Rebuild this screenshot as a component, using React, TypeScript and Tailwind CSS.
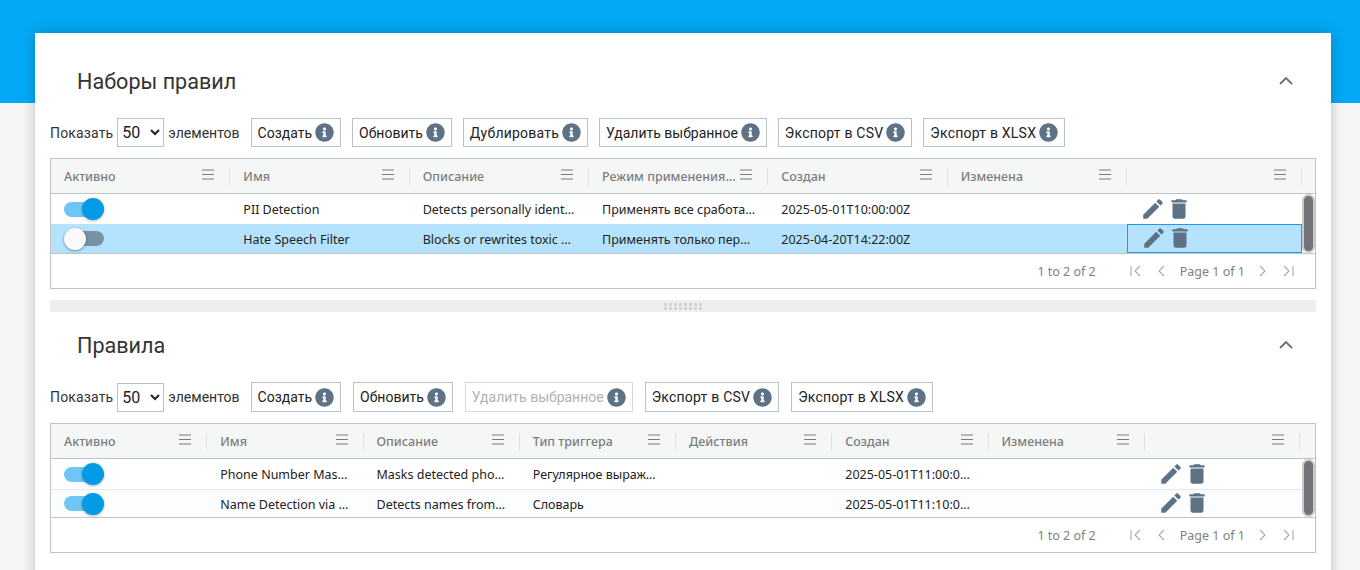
import type { ReactNode } from "react";
import { FaInfoCircle } from "react-icons/fa";

interface Column {
    title: string;
    truncatedTitle?: boolean;
}

interface Row {
    active: boolean;
    cells: string[];
    selected?: boolean;
    height: number;
    striped?: boolean;
}

const TOOLBAR_ONE = ["Создать", "Обновить", "Дублировать", "Удалить выбранное", "Экспорт в CSV", "Экспорт в XLSX"];
const TOOLBAR_TWO = ["Создать", "Обновить", "Удалить выбранное", "Экспорт в CSV", "Экспорт в XLSX"];
const WIDE_LABELS = ["Дублировать", "Экспорт в CSV", "Экспорт в XLSX"];

const MenuIcon = () => (
    <svg width="12" height="11" viewBox="0 0 12 11" className="shrink-0 -mt-[3px]">
        <path d="M0 1h12M0 5.5h12M0 10h12" stroke="#77797a" strokeWidth="1.2" fill="none" />
    </svg>
);

const Toggle = ({ on }: { on: boolean }) => (
    <div
        className={
            on
                ? "flex h-[15px] w-10 items-center justify-end rounded-full bg-[#6fc5f3]"
                : "flex h-[15px] w-10 items-center justify-start rounded-full bg-[#7891a4]"
        }
    >
        <div
            className={
                on
                    ? "h-[22px] w-[22px] shrink-0 rounded-full bg-[#039be5] shadow-[0_1px_3px_rgba(0,0,0,0.3)]"
                    : "h-[22px] w-[22px] shrink-0 rounded-full bg-[#fafafa] shadow-[0_1px_3px_rgba(0,0,0,0.4)]"
            }
        />
    </div>
);

const Actions = () => (
    <div className="flex h-[27px] items-start">
        <svg width="26" height="26" viewBox="0 0 24 24" fill="#5d7284" className="shrink-0">
            <path d="M3 17.25V21h3.75L17.81 9.94l-3.75-3.75L3 17.25zM20.71 7.04c.39-.39.39-1.02 0-1.41l-2.34-2.34c-.39-.39-1.02-.39-1.41 0l-1.83 1.83 3.75 3.75 1.83-1.83z" />
        </svg>
        <svg width="26" height="26" viewBox="0 0 24 24" fill="#5d7284" className="shrink-0">
            <path d="M6 19c0 1.1.9 2 2 2h8c1.1 0 2-.9 2-2V7H6v12zM19 4h-3.5l-1-1h-5l-1 1H5v2h14V4z" />
        </svg>
    </div>
);

const PagerIcon = ({ d }: { d: string }) => (
    <svg width="12" height="12" viewBox="0 0 12 12" fill="none" className="shrink-0 -mt-[3px]">
        <path d={d} stroke="#a4a8aa" strokeWidth="1.1" />
    </svg>
);

const Toolbar = ({ buttons, disabled, tall }: { buttons: string[]; disabled?: string; tall?: boolean }) => (
    <div className={`flex ${tall ? "h-[30px]" : "h-[29px]"} items-center font-['Roboto',sans-serif] text-sm text-[#333]`}>
        <span className="tracking-[0.15px]">Показать</span>
        <select
            defaultValue="50"
            className="mx-1 h-[29px] w-[47px] border border-[#b9c1c8] bg-white text-base text-[#222]"
        >
            <option value="50">50</option>
        </select>
        <span className="mr-[11px]">элементов</span>
        <div className={`flex ${tall ? "gap-[12px]" : "gap-[11px]"}`}>
            {buttons.map((b) => (
                <button
                    key={b}
                    className={[
                        "flex items-center gap-[3px] border pl-[6px] pr-[6px]",
                        tall ? "h-[30px]" : "h-[29px]",
                        b === disabled ? "border-[#d5dadd] text-[#aeb2b5]" : "border-[#b9c1c8] text-[#222]",
                        WIDE_LABELS.includes(b) ? "tracking-[0.22px]" : "",
                    ].join(" ")}
                >
                    {b}
                    <FaInfoCircle className="text-[#5d7284]" size={19} />
                </button>
            ))}
        </div>
    </div>
);

const Grid = ({
    columns,
    rows,
    colWidth,
    lastCol,
    cellPad,
}: {
    columns: Column[];
    rows: Row[];
    colWidth: string;
    lastCol: string;
    cellPad: string;
}) => (
    <div className="mt-[11px] border border-[#bdc3c7] font-['Noto_Sans',sans-serif] text-[12.5px]">
        {/* Header */}
        <div className="flex h-[35px] border-b border-[#bdc3c7] bg-[#f5f7f7] text-[#7b7d7e]">
            {columns.map((c, i) => (
                <div key={i} className={`${i === columns.length - 1 ? lastCol : colWidth} flex shrink-0 items-center`}>
                    <span className="min-w-0 flex-1 truncate pl-[13px] pt-[3px] font-medium">{c.title}</span>
                    <div className={c.truncatedTitle ? "ml-[3px] mr-[15px] flex" : "mr-[15px] flex"}>
                        <MenuIcon />
                    </div>
                    <div className="h-[17px] w-px shrink-0 bg-[#dfe2e3]" />
                </div>
            ))}
        </div>

        {/* Rows */}
        <div className="flex border-b border-[#bdc3c7]">
            <div className="min-w-0 flex-1">
                {rows.map((r, ri) => (
                    <div
                        key={ri}
                        className={
                            r.selected
                                ? "flex overflow-hidden bg-[#b5e3fd] text-[#222]"
                                : r.striped
                                  ? "flex overflow-hidden border-t border-[#e6e9ec] bg-[#fbfdff] text-[#222]"
                                  : "flex overflow-hidden bg-white text-[#222]"
                        }
                        style={{ height: r.height }}
                    >
                        {columns.map((_, i) => {
                            const isLast = i === columns.length - 1;
                            return (
                                <div
                                    key={i}
                                    className={`${isLast ? lastCol : colWidth} flex shrink-0 items-center pl-[13px] ${cellPad} ${
                                        isLast && r.selected ? "border border-[#2196f3] pl-[12px]" : ""
                                    }`}
                                >
                                    {i === 0 && <Toggle on={r.active} />}
                                    {i > 0 && !isLast && (
                                        <span className={r.selected || r.striped ? "truncate pt-[4px]" : "truncate pt-[2px]"}>
                                            {r.cells[i - 1]}
                                        </span>
                                    )}
                                    {isLast && <Actions />}
                                </div>
                            );
                        })}
                    </div>
                ))}
            </div>
            {/* Scrollbar */}
            <div className="w-[13px] shrink-0 rounded-full border-2 border-[#c9c9cc] bg-[#747378]" />
        </div>

        {/* Pager */}
        <div className="flex h-[34px] items-center justify-end pr-[21px] pt-[3px] text-[#7d8284]">
            <span>1 to 2 of 2</span>
            <div className="ml-[34px] flex items-center">
                <PagerIcon d="M1 1v10M10 1L5 6l5 5" />
                <div className="ml-[13px]">
                    <PagerIcon d="M9 1L4 6l5 5" />
                </div>
                <span className="ml-[13px] mr-[12px]">Page 1 of 1</span>
                <PagerIcon d="M3 1l5 5-5 5" />
                <div className="ml-[13px]">
                    <PagerIcon d="M2 1l5 5-5 5M11 1v10" />
                </div>
            </div>
        </div>
    </div>
);

const Section = ({ title, children }: { title: string; children: ReactNode }) => (
    <section>
        <div className="flex h-[70px] items-center justify-between pl-[27px] pr-[23px]">
            <h2 className="-mt-[2px] font-['Roboto',sans-serif] text-[21.6px] text-[#333]">{title}</h2>
            <svg width="14" height="9" viewBox="0 0 14 9" fill="none" className="-mt-[5px]">
                <path d="M1 8l6-6 6 6" stroke="#6f6f6f" strokeWidth="1.8" />
            </svg>
        </div>
        {children}
    </section>
);

const firstColumns: Column[] = [
    { title: "Активно" },
    { title: "Имя" },
    { title: "Описание" },
    { title: "Режим применения правил", truncatedTitle: true },
    { title: "Создан" },
    { title: "Изменена" },
    { title: "" },
];

const firstRows: Row[] = [
    {
        active: true,
        height: 30,
        cells: ["PII Detection", "Detects personally identifiable information", "Применять все сработавшие", "2025-05-01T10:00:00Z", ""],
    },
    {
        active: false,
        height: 29,
        selected: true,
        cells: ["Hate Speech Filter", "Blocks or rewrites toxic content", "Применять только первое", "2025-04-20T14:22:00Z", ""],
    },
];

const secondColumns: Column[] = [
    { title: "Активно" },
    { title: "Имя" },
    { title: "Описание" },
    { title: "Тип триггера" },
    { title: "Действия" },
    { title: "Создан" },
    { title: "Изменена" },
    { title: "" },
];

const secondRows: Row[] = [
    {
        active: true,
        height: 30,
        cells: ["Phone Number Masking", "Masks detected phone numbers", "Регулярное выражение", "", "2025-05-01T11:00:00Z", ""],
    },
    {
        active: true,
        height: 28,
        striped: true,
        cells: ["Name Detection via Dictionary", "Detects names from dictionary", "Словарь", "", "2025-05-01T11:10:00Z", ""],
    },
];

export default function App() {
    return (
        <div className="h-screen overflow-hidden bg-[#f5f5f5]">
            <div className="h-[103px] bg-[#03a9f4]" />
            <div className="ml-[35px] mr-[29px] -mt-[70px] bg-white px-[15px] pt-[15px] pb-10 shadow-[0_0_12px_rgba(0,0,0,0.22)]">
                <Section title="Наборы правил">
                    <Toolbar buttons={TOOLBAR_ONE} />
                    <Grid columns={firstColumns} rows={firstRows} colWidth="w-[179.33px]" lastCol="w-[175px]" cellPad="pr-[13px]" />
                </Section>

                {/* Splitter */}
                <div className="mt-[11px] flex h-3 items-center justify-center bg-[#eeeeee]">
                    <div className="grid grid-cols-8 gap-x-[2px] gap-y-px">
                        {Array.from({ length: 16 }).map((_, i) => (
                            <div key={i} className="h-[3px] w-[3px] bg-[#d4d4d4]" />
                        ))}
                    </div>
                </div>

                <Section title="Правила">
                    <Toolbar buttons={TOOLBAR_TWO} disabled="Удалить выбранное" tall />
                    <Grid columns={secondColumns} rows={secondRows} colWidth="w-[156.25px]" lastCol="w-[155.25px]" cellPad="pr-[14.5px]" />
                </Section>
            </div>
        </div>
    );
}
